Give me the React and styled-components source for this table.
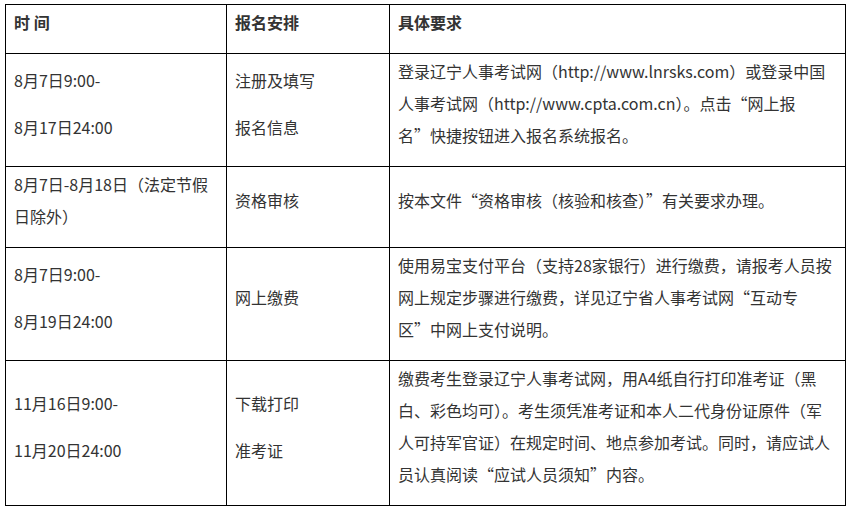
import React from 'react';
import styled, { createGlobalStyle } from 'styled-components';

const GlobalStyle = createGlobalStyle`
  html, body {
    margin: 0;
    padding: 0;
    background: #ffffff;
  }
  body {
    font-family: "Noto Sans CJK SC", "Noto Sans", sans-serif;
    color: #333333;
  }
`;

const Page = styled.div`
  padding: 4px 6px 4px 5px;
`;

const Table = styled.table`
  border-collapse: collapse;
  width: 840px;
  table-layout: fixed;
`;

const Col = styled.col`
  width: ${(p) => p.$w}px;
`;

const Cell = styled.td`
  border: 1px solid #000000;
  padding: 1px 8px 0;
  vertical-align: middle;
  font-size: 16px;
  color: #333333;
`;

const HeadCell = styled(Cell)`
  font-weight: bold;
  padding-top: 1px;
`;

const Para = styled.p`
  margin: 0 0 15px;
  line-height: 32px;
  white-space: nowrap;
`;

const rows = [
  {
    time: ['8月7日9:00-', '8月17日24:00'],
    step: ['注册及填写', '报名信息'],
    desc: [
      '登录辽宁人事考试网（http://www.lnrsks.com）或登录中国',
      '人事考试网（http://www.cpta.com.cn）。点击“网上报',
      '名”快捷按钮进入报名系统报名。',
    ],
  },
  {
    time: [['8月7日-8月18日（法定节假', '日除外）']],
    step: ['资格审核'],
    desc: ['按本文件“资格审核（核验和核查）”有关要求办理。'],
  },
  {
    time: ['8月7日9:00-', '8月19日24:00'],
    step: ['网上缴费'],
    desc: [
      '使用易宝支付平台（支持28家银行）进行缴费，请报考人员按',
      '网上规定步骤进行缴费，详见辽宁省人事考试网“互动专',
      '区”中网上支付说明。',
    ],
  },
  {
    time: ['11月16日9:00-', '11月20日24:00'],
    step: ['下载打印', '准考证'],
    desc: [
      '缴费考生登录辽宁人事考试网，用A4纸自行打印准考证（黑',
      '白、彩色均可）。考生须凭准考证和本人二代身份证原件（军',
      '人可持军官证）在规定时间、地点参加考试。同时，请应试人',
      '员认真阅读“应试人员须知”内容。',
    ],
  },
];

// a single paragraph whose lines are kept as in the original
function Lines({ lines }) {
  return (
    <Para>
      {lines.map((l, i) => (
        <React.Fragment key={i}>
          {i > 0 && <br />}
          {l}
        </React.Fragment>
      ))}
    </Para>
  );
}

// each entry is its own paragraph; an array entry is one wrapped paragraph
function Paras({ items }) {
  return items.map((it, i) =>
    Array.isArray(it) ? <Lines key={i} lines={it} /> : <Para key={i}>{it}</Para>
  );
}

export default function App() {
  return (
    <Page>
      <GlobalStyle />
      <Table>
        <colgroup>
          <Col $w={221} />
          <Col $w={163} />
          <Col $w={456} />
        </colgroup>
        <tbody>
          <tr>
            <HeadCell>
              <Para>时 间</Para>
            </HeadCell>
            <HeadCell>
              <Para>报名安排</Para>
            </HeadCell>
            <HeadCell>
              <Para>具体要求</Para>
            </HeadCell>
          </tr>
          {rows.map((r, i) => (
            <tr key={i}>
              <Cell>
                <Paras items={r.time} />
              </Cell>
              <Cell>
                <Paras items={r.step} />
              </Cell>
              <Cell>
                <Lines lines={r.desc} />
              </Cell>
            </tr>
          ))}
        </tbody>
      </Table>
    </Page>
  );
}
